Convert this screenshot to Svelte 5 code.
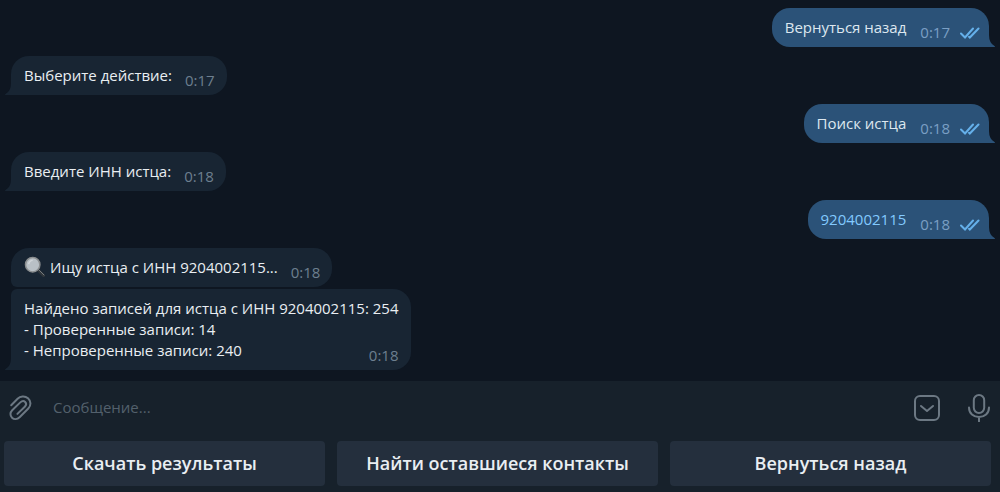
<script>
	let draft = ''

	const messages = [
		{lines: ['Вернуться назад'], time: '0:17', out: true},
		{lines: ['Выберите действие:'], time: '0:17'},
		{lines: ['Поиск истца'], time: '0:18', out: true},
		{lines: ['Введите ИНН истца:'], time: '0:18'},
		{lines: ['9204002115'], time: '0:18', out: true, phone: true},
		{lines: ['Ищу истца с ИНН 9204002115...'], time: '0:18', search: true, first: true},
		{
			lines: [
				'Найдено записей для истца с ИНН 9204002115: 254',
				'- Проверенные записи: 14',
				'- Непроверенные записи: 240'
			],
			time: '0:18',
			last: true
		}
	]

	const keyboard = ['Скачать результаты', 'Найти оставшиеся контакты', 'Вернуться назад']
</script>

<main>
	<div class="history">
		{#each messages as msg}
			<div class="bubble" class:out={msg.out} class:first={msg.first} class:last={msg.last}>
				{#if msg.search}
					<svg class="emoji" viewBox="0 0 22 22" width="22" height="22" role="img" aria-label="Поиск">
						<path d="M14 14L19.5 19.5" stroke="#30363b" stroke-width="3" stroke-linecap="round" />
						<path d="M15 14L20 19" stroke="#767b7e" stroke-width="1" stroke-linecap="round" />
						<circle cx="8.7" cy="8.7" r="7.2" fill="#b9c0c6" stroke="#8b8e90" stroke-width="1.5" />
						<path d="M4.7 8.2Q5.2 4.7 8.7 4.2" stroke="#d0d5d9" stroke-width="1.5" fill="none" />
					</svg>
				{/if}
				<div class="text">
					{#each msg.lines as line}
						{#if msg.phone}<a href="tel:{line}">{line}</a>{:else}<span>{line}</span>{/if}
					{/each}
				</div>
				<div class="info">
					<time>{msg.time}</time>
					{#if msg.out}
						<svg class="ticks" viewBox="0 0 20 12" width="20" height="12" aria-label="Прочитано">
							<path d="M1 6.5L5 10.5L13 1.5M9 9.8L9.8 10.5L18.5 1.5" />
						</svg>
					{/if}
				</div>
				{#if !msg.first}
					<svg class="tail" viewBox="0 0 7 12" width="7" height="12" aria-hidden="true">
						<path d="M7 0V12H0.5Q-0.5 11.5 0.5 11Q6 8 6 0Z" />
					</svg>
				{/if}
			</div>
		{/each}
	</div>

	<footer>
		<form class="composer" on:submit|preventDefault={() => (draft = '')}>
			<button type="button" class="icon" aria-label="Прикрепить файл">
				<svg viewBox="0 0 24 26" width="24" height="26">
					<path d="M2.2 10.2L8.6 3.8C11.2 1.2 15.8.5 19 3.3C22.2 6.2 22.2 10.5 19.3 13.5L10.6 22.2C8.2 24.6 5 24.6 3 22.7C.9 20.7.9 17.5 3.2 15.2L11.3 7.4C13 5.8 15 5.8 16.2 7C17.5 8.3 17.3 10.2 15.8 11.7L8.4 18.9" />
				</svg>
			</button>
			<input bind:value={draft} placeholder="Сообщение..." aria-label="Сообщение" />
			<button type="button" class="icon" aria-label="Скрыть клавиатуру">
				<svg viewBox="0 0 26 26" width="26" height="26">
					<rect x="1" y="1" width="24" height="24" rx="5" />
					<path d="M7 11L13 16L19 11" />
				</svg>
			</button>
			<button type="button" class="icon mic" aria-label="Записать голосовое сообщение">
				<svg viewBox="0 0 22 28" width="22" height="28">
					<rect x="5.8" y="1" width="10.4" height="18" rx="5.2" />
					<path d="M1 13.5C1 19.5 5.5 23 11 23S21 19.5 21 13.5M11 23V27.5" />
				</svg>
			</button>
		</form>
		<div class="keyboard">
			{#each keyboard as label}
				<button type="button">{label}</button>
			{/each}
		</div>
	</footer>
</main>

<style>
	:global(body) {
		background: #0e1621;
	}
	main {
		font-family: "Open Sans", "Noto Sans", sans-serif;
		font-size: 15px;
		line-height: 21px;
		color: #e9eef2;
	}
	button, input {
		font: inherit;
		border: 0;
		padding: 0;
		background: none;
	}
	.history {
		display: flex;
		flex-direction: column;
		align-items: flex-start;
		gap: 9px;
		padding: 8px 11px 11px;
	}
	.bubble {
		position: relative;
		display: flex;
		padding: 0 12px 0 13px;
		border-radius: 18px 18px 18px 0;
		background: #182533;
	}
	.text {
		display: flex;
		flex-direction: column;
		align-items: flex-start;
		padding: 9px 0;
	}
	.emoji {
		align-self: center;
		margin: 0 4px 2px 0;
	}
	.info {
		display: flex;
		align-items: center;
		align-self: flex-end;
		gap: 10px;
		margin-left: 13px;
		padding-bottom: 4px;
		color: #6d7f8f;
	}
	.out {
		align-self: flex-end;
		padding: 0 9px 0 13px;
		border-radius: 18px 18px 0 18px;
		background: #2b5278;
		color: #dde7ef;
	}
	.out .info {
		margin-left: 14px;
		color: #7a9fc4;
	}
	.out a {
		color: #83caff;
		text-decoration: none;
	}
	.first {
		border-radius: 18px 18px 18px 6px;
	}
	/* the time shares the last line with the text */
	.last {
		display: grid;
		margin-top: -7px;
		border-radius: 6px 18px 18px 0;
	}
	.last .text, .last .info {
		grid-area: 1 / 1;
	}
	.last .info {
		justify-self: end;
	}
	.ticks path {
		fill: none;
		stroke: #65b0ea;
		stroke-width: 2;
		stroke-linecap: round;
	}
	.tail {
		position: absolute;
		bottom: 0;
		left: -6px;
		fill: #182533;
	}
	.out .tail {
		left: auto;
		right: -6px;
		transform: scaleX(-1);
		fill: #2b5278;
	}
	footer {
		background: #17212b;
		padding-bottom: 6px;
	}
	.composer {
		display: flex;
		align-items: center;
		height: 52px;
		padding: 1px 10px 7px 9px;
	}
	.icon {
		display: flex;
	}
	.icon svg {
		fill: none;
		stroke: #6c7883;
		stroke-width: 2;
		stroke-linecap: round;
		stroke-linejoin: round;
	}
	.mic {
		margin-left: 28px;
	}
	input {
		flex: 1;
		min-width: 0;
		margin-left: 20px;
		padding-bottom: 2px;
		color: #e9eef2;
		outline: none;
	}
	input::placeholder {
		color: #53606c;
		opacity: 1;
	}
	.keyboard {
		display: grid;
		grid-template-columns: repeat(3, 1fr);
		gap: 12px;
		padding: 0 9px 0 4px;
	}
	.keyboard button {
		height: 45px;
		border-radius: 4px;
		background: #242f3d;
		color: #e9eef2;
		font-size: 18px;
		font-weight: 600;
	}
</style>
